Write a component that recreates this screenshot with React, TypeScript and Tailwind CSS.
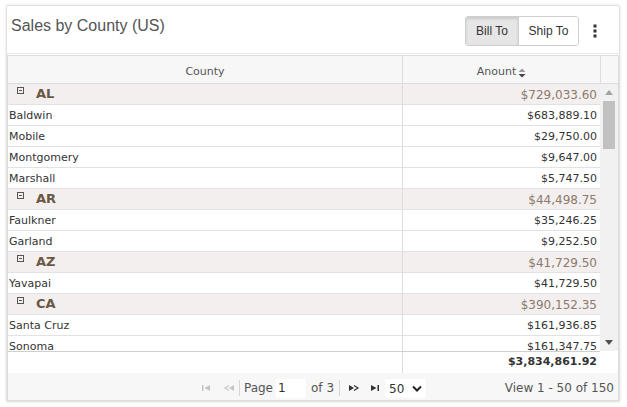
import React from 'react'

type Row = { name: string; amount: string; group?: boolean }

const rows: Row[] = [
  { name: 'AL', amount: '$729,033.60', group: true },
  { name: 'Baldwin', amount: '$683,889.10' },
  { name: 'Mobile', amount: '$29,750.00' },
  { name: 'Montgomery', amount: '$9,647.00' },
  { name: 'Marshall', amount: '$5,747.50' },
  { name: 'AR', amount: '$44,498.75', group: true },
  { name: 'Faulkner', amount: '$35,246.25' },
  { name: 'Garland', amount: '$9,252.50' },
  { name: 'AZ', amount: '$41,729.50', group: true },
  { name: 'Yavapai', amount: '$41,729.50' },
  { name: 'CA', amount: '$390,152.35', group: true },
  { name: 'Santa Cruz', amount: '$161,936.85' },
  { name: 'Sonoma', amount: '$161,347.75' },
]

function MinusBox() {
  return (
    <svg width="7" height="7" viewBox="0 0 7 7" className="shrink-0 mt-[3px]">
      <rect x="0.5" y="0.5" width="6" height="6" fill="none" stroke="#555" />
      <path d="M2 3.5h3" stroke="#555" />
    </svg>
  )
}

function SortIcon() {
  return (
    <svg width="8" height="10" viewBox="0 0 8 10" className="ml-[2px]">
      <path d="M4 0.5L7.5 4H0.5z" fill="#9a9a9a" />
      <path d="M4 9.5L7.5 6H0.5z" fill="#444" />
    </svg>
  )
}

function PagerIcon({ kind, disabled }: { kind: 'first' | 'prev' | 'next' | 'last'; disabled?: boolean }) {
  const c = disabled ? '#c4c4c4' : '#333'
  return (
    <svg width="12" height="8" viewBox="0 0 12 8">
      {kind === 'first' && (
        <>
          <rect x="2" y="1" width="1.5" height="6" fill={c} />
          <path d="M10 1v6L4.5 4z" fill={c} />
        </>
      )}
      {kind === 'prev' && (
        <>
          <path d="M6 1.5L2 4l4 2.5" stroke={c} strokeWidth="1.2" fill="none" />
          <path d="M11 1v6L6 4z" fill={c} />
        </>
      )}
      {kind === 'next' && (
        <>
          <path d="M1 1v6L6 4z" fill={c} />
          <path d="M6 1.5L10 4 6 6.5" stroke={c} strokeWidth="1.2" fill="none" />
        </>
      )}
      {kind === 'last' && (
        <>
          <path d="M2 1v6L7.5 4z" fill={c} />
          <rect x="8.5" y="1" width="1.5" height="6" fill={c} />
        </>
      )}
    </svg>
  )
}

export default function App() {
  return (
    <div className="w-[627px] h-[407px] bg-white pt-[5px] pl-[6px] font-['DejaVu_Sans',sans-serif]">
      <div className="w-[614px] flex flex-col border border-[#e2e2e2] rounded-[2px] shadow-[0_0_3px_rgba(0,0,0,0.12)] bg-white">
        {/* Card header */}
        <div className="h-[48px] flex items-start justify-between border-b border-[#e6e6e6] pl-[4px] pr-[22px]">
          <h1 className="mt-[8px] text-[16px] text-[#555] font-['Liberation_Sans',Arial,sans-serif]">
            Sales by County (US)
          </h1>
          <div className="flex items-center mt-[10px]">
            <div className="flex h-[30px] rounded-[3px] border border-[#cfcfcf] font-['Liberation_Sans',Arial,sans-serif] text-[12px] text-[#333] overflow-hidden">
              <button className="w-[53px] bg-[#e6e6e6] shadow-[inset_0_2px_3px_rgba(0,0,0,0.12)] border-r border-[#cfcfcf]">
                Bill To
              </button>
              <button className="w-[59px] bg-white">Ship To</button>
            </div>
            <svg width="4" height="14" viewBox="0 0 4 14" className="ml-[14px]">
              <rect x="0.5" y="0.5" width="3" height="3" fill="#333" />
              <rect x="0.5" y="5.5" width="3" height="3" fill="#333" />
              <rect x="0.5" y="10.5" width="3" height="3" fill="#333" />
            </svg>
          </div>
        </div>

        {/* Grid */}
        <div className="mt-[1px] border-x border-t border-[#dcdcdc] flex flex-col text-[11px] text-[#333]">
          {/* Column headers */}
          <div className="flex h-[28px] bg-[#f7f7f7] border-b border-[#dcdcdc] text-[#555]">
            <div className="w-[394px] flex items-center justify-center pt-[6px]">County</div>
            <div className="w-[198px] border-l border-[#dcdcdc] flex items-center justify-center pt-[6px]">
              Anount
              <SortIcon />
            </div>
            <div className="w-[18px] border-l border-[#dcdcdc]" />
          </div>

          {/* Body */}
          <div className="flex h-[267px] overflow-hidden">
            <div className="w-[592px] flex flex-col">
              {rows.map((r) =>
                r.group ? (
                  <div key={r.name} className="flex h-[21px] shrink-0 bg-[#f3efef] border-b border-[#e2e2e2]">
                    <div className="w-[394px] flex items-start pl-[9px] gap-[12px]">
                      <MinusBox />
                      <span className="font-bold text-[13px] leading-[20px] text-[#6a5843]">{r.name}</span>
                    </div>
                    <div className="w-[198px] border-l border-[#dcdcdc] flex items-center justify-end pr-[3px] pt-[1px] text-[12px] text-[#8a7b6c]">
                      {r.amount}
                    </div>
                  </div>
                ) : (
                  <div key={r.name} className="flex h-[21px] shrink-0 border-b border-[#e2e2e2]">
                    <div className="w-[394px] flex items-center pl-[1px] pt-[2px]">{r.name}</div>
                    <div className="w-[198px] border-l border-[#dcdcdc] flex items-center justify-end pr-[3px] pt-[2px]">
                      {r.amount}
                    </div>
                  </div>
                ),
              )}
            </div>
            {/* Scrollbar */}
            <div className="w-[18px] bg-[#f1f1f1] flex flex-col items-center">
              <svg width="8" height="5" viewBox="0 0 8 5" className="mt-[6px]">
                <path d="M4 0L8 5H0z" fill="#a3a3a3" />
              </svg>
              <div className="w-[12px] h-[48px] bg-[#c1c1c1] mt-[6px]" />
              <div className="flex-1" />
              <svg width="8" height="5" viewBox="0 0 8 5" className="mb-[6px]">
                <path d="M4 5L8 0H0z" fill="#505050" />
              </svg>
            </div>
          </div>

          {/* Totals */}
          <div className="flex h-[22px] border-t border-[#cfcfcf] w-[592px]">
            <div className="w-[394px]" />
            <div className="w-[198px] border-l border-[#dcdcdc] flex items-center justify-end pr-[3px] font-bold">
              $3,834,861.92
            </div>
          </div>

          {/* Pager */}
          <div className="h-[28px] bg-[#f7f7f7] border-b border-[#dcdcdc] flex items-center pt-[3px] text-[12px] text-[#555] relative">
            <div className="flex-1 flex items-center justify-center">
              <div className="flex items-center gap-[11px]">
                <PagerIcon kind="first" disabled />
                <PagerIcon kind="prev" disabled />
              </div>
              <div className="w-px h-[16px] bg-[#d6d6d6] mx-[4px]" />
              <span>Page</span>
              <div className="ml-[3px] w-[30px] h-[19px] bg-white rounded-[2px] flex items-center pl-[2px] text-[#333]">1</div>
              <span className="ml-[5px]">of 3</span>
              <div className="w-px h-[16px] bg-[#d6d6d6] mx-[5px]" />
              <div className="flex items-center gap-[9px] ml-[3px]">
                <PagerIcon kind="next" />
                <PagerIcon kind="last" />
              </div>
              <div className="ml-[4px] w-[41px] h-[19px] bg-white rounded-[2px] flex items-center justify-between px-[4px] text-[#333]">
                <span className="pt-[2px]">50</span>
                <svg width="10" height="7" viewBox="0 0 10 7">
                  <path d="M1 1.5l4 4 4-4" stroke="#222" strokeWidth="2" fill="none" />
                </svg>
              </div>
            </div>
            <div className="absolute right-[4px] top-[3px] bottom-0 flex items-center">View 1 - 50 of 150</div>
          </div>
        </div>
      </div>
    </div>
  )
}
